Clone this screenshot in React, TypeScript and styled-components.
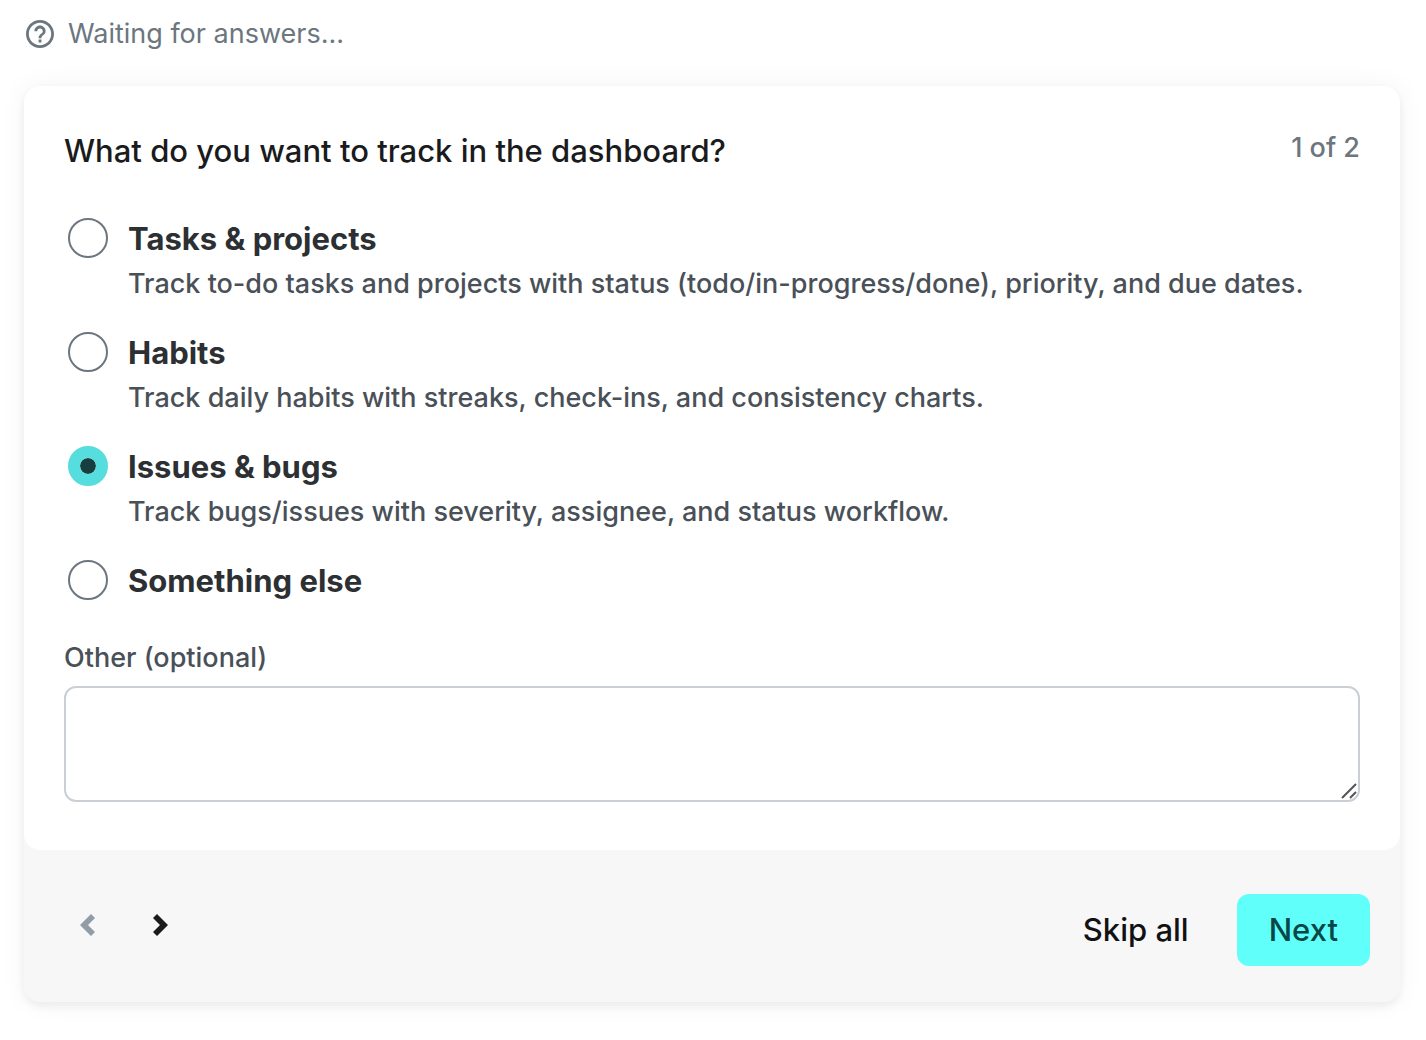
import React, { useState } from "react";
import styled, { createGlobalStyle } from "styled-components";

const GlobalStyle = createGlobalStyle`
  *, *::before, *::after { box-sizing: border-box; }
  body {
    margin: 0;
    background: #fff;
    color: #1a1b1c;
    font-family: Inter, "Liberation Sans", sans-serif;
    font-size: 27px;
    font-weight: 500;
    line-height: 36px;
  }
`;

const Page = styled.main`
  padding: 16px 26px 38px 24px;
`;

const Status = styled.div`
  display: flex;
  align-items: center;
  gap: 14px;
  padding-left: 2px;
  margin-bottom: 34px;
  color: #6c767e;
  font-weight: 400;
`;

const HelpIcon = styled.svg`
  width: 28px;
  height: 28px;
  flex: none;
  fill: currentColor;
`;

const Card = styled.form`
  border-radius: 16px;
  background: #f7f7f7;
  box-shadow: 0 4px 8px rgba(0, 0, 0, 0.06), 0 0 28px rgba(0, 0, 0, 0.05);
`;

const Panel = styled.div`
  padding: 44px 40px 48px;
  border-radius: 16px;
  background: #fff;
`;

const Heading = styled.header`
  display: flex;
  justify-content: space-between;
  align-items: flex-start;
  gap: 24px;
  margin-bottom: 46px;
`;

const Title = styled.h1`
  margin: 0;
  font-size: 31px;
  line-height: 42px;
  font-weight: 500;
`;

const Counter = styled.span`
  flex: none;
  color: #6c767e;
`;

const Options = styled.div`
  display: flex;
  flex-direction: column;
  gap: 24px;
`;

const Option = styled.div`
  display: flex;
  gap: 20px;
  padding-left: 4px;
`;

const Radio = styled.input`
  appearance: none;
  flex: none;
  width: 40px;
  height: 40px;
  margin: 0;
  border: 2px solid #6c7680;
  border-radius: 50%;
  background: #fff;
  cursor: pointer;

  &:checked {
    border: 12px solid #55dedd;
    background: #173f3f padding-box;
  }
`;

const OptionLabel = styled.label`
  display: block;
  color: #2c3033;
  font-size: 31px;
  line-height: 42px;
  font-weight: 700;
  cursor: pointer;
`;

const Description = styled.p`
  margin: 0;
  color: #495057;
  line-height: 48px;
`;

const Field = styled.div`
  position: relative;
  margin-top: 38px;
`;

const FieldLabel = styled.label`
  display: block;
  margin-bottom: 10px;
  color: #495057;
`;

const TextArea = styled.textarea`
  display: block;
  width: 100%;
  height: 116px;
  padding: 16px;
  border: 2px solid #c9cfd4;
  border-radius: 12px;
  background: #fff;
  color: inherit;
  font: inherit;
  resize: vertical;

  &::-webkit-resizer { display: none; }
`;

const ResizeGrip = styled.svg`
  position: absolute;
  right: 3px;
  bottom: 3px;
  width: 16px;
  height: 16px;
  pointer-events: none;
  fill: none;
  stroke: #555;
  stroke-width: 2;
`;

const Footer = styled.footer`
  display: flex;
  align-items: center;
  justify-content: space-between;
  padding: 44px 30px 36px 34px;
`;

const Group = styled.div<{ $gap: number }>`
  display: flex;
  align-items: center;
  gap: ${(p) => p.$gap}px;
`;

const ArrowButton = styled.button`
  display: flex;
  align-items: center;
  justify-content: center;
  width: 60px;
  height: 60px;
  margin-bottom: 10px;
  padding: 0;
  border: 0;
  background: none;
  color: #1a1b1c;
  cursor: pointer;

  &:disabled { color: #929ca6; cursor: default; }

  svg { width: 16px; height: 22px; fill: currentColor; }
`;

const ActionButton = styled.button<{ $primary?: boolean }>`
  height: 72px;
  padding: 0 32px;
  border: 0;
  border-radius: 12px;
  background: ${(p) => (p.$primary ? "#60fffa" : "transparent")};
  color: ${(p) => (p.$primary ? "#084747" : "#111213")};
  font-family: inherit;
  font-size: 31px;
  line-height: 42px;
  font-weight: 500;
  cursor: pointer;
`;

const choices = [
  {
    id: "tasks",
    label: "Tasks & projects",
    description:
      "Track to-do tasks and projects with status (todo/in-progress/done), priority, and due dates.",
  },
  {
    id: "habits",
    label: "Habits",
    description: "Track daily habits with streaks, check-ins, and consistency charts.",
  },
  {
    id: "issues",
    label: "Issues & bugs",
    description: "Track bugs/issues with severity, assignee, and status workflow.",
  },
  { id: "else", label: "Something else" },
];

export default function App() {
  const [selected, setSelected] = useState("issues");

  return (
    <>
      <GlobalStyle />
      <Page>
        <Status role="status">
          <HelpIcon viewBox="2 2 20 20" aria-hidden="true">
            <path d="M11 18h2v-2h-2v2zm1-16C6.48 2 2 6.48 2 12s4.48 10 10 10 10-4.48 10-10S17.52 2 12 2zm0 18c-4.41 0-8-3.59-8-8s3.59-8 8-8 8 3.59 8 8-3.59 8-8 8zm0-14c-2.21 0-4 1.79-4 4h2c0-1.1.9-2 2-2s2 .9 2 2c0 2-3 1.75-3 5h2c0-2.25 3-2.5 3-5 0-2.21-1.79-4-4-4z" />
          </HelpIcon>
          <span>Waiting for answers...</span>
        </Status>
        <Card onSubmit={(e) => e.preventDefault()}>
          <Panel>
            <Heading>
              <Title id="question">What do you want to track in the dashboard?</Title>
              <Counter>1 of 2</Counter>
            </Heading>
            <Options role="radiogroup" aria-labelledby="question">
              {choices.map((choice) => (
                <Option key={choice.id}>
                  <Radio
                    type="radio"
                    name="track"
                    id={choice.id}
                    checked={selected === choice.id}
                    onChange={() => setSelected(choice.id)}
                  />
                  <div>
                    <OptionLabel htmlFor={choice.id}>{choice.label}</OptionLabel>
                    {choice.description && <Description>{choice.description}</Description>}
                  </div>
                </Option>
              ))}
            </Options>
            <Field>
              <FieldLabel htmlFor="other">Other (optional)</FieldLabel>
              <TextArea id="other" />
              <ResizeGrip viewBox="0 0 16 16" aria-hidden="true">
                <path d="M1 15 15 1M9 15 15 9" />
              </ResizeGrip>
            </Field>
          </Panel>
          <Footer>
            <Group $gap={12}>
              <ArrowButton type="button" aria-label="Previous question" disabled>
                <svg viewBox="0 0 16 22" aria-hidden="true">
                  <path d="M11 0 15 4 8 11 15 18 11 22 0 11z" />
                </svg>
              </ArrowButton>
              <ArrowButton type="button" aria-label="Next question">
                <svg viewBox="0 0 16 22" aria-hidden="true">
                  <path d="M5 0 1 4 8 11 1 18 5 22 16 11z" />
                </svg>
              </ArrowButton>
            </Group>
            <Group $gap={16}>
              <ActionButton type="button">Skip all</ActionButton>
              <ActionButton type="submit" $primary>
                Next
              </ActionButton>
            </Group>
          </Footer>
        </Card>
      </Page>
    </>
  );
}
